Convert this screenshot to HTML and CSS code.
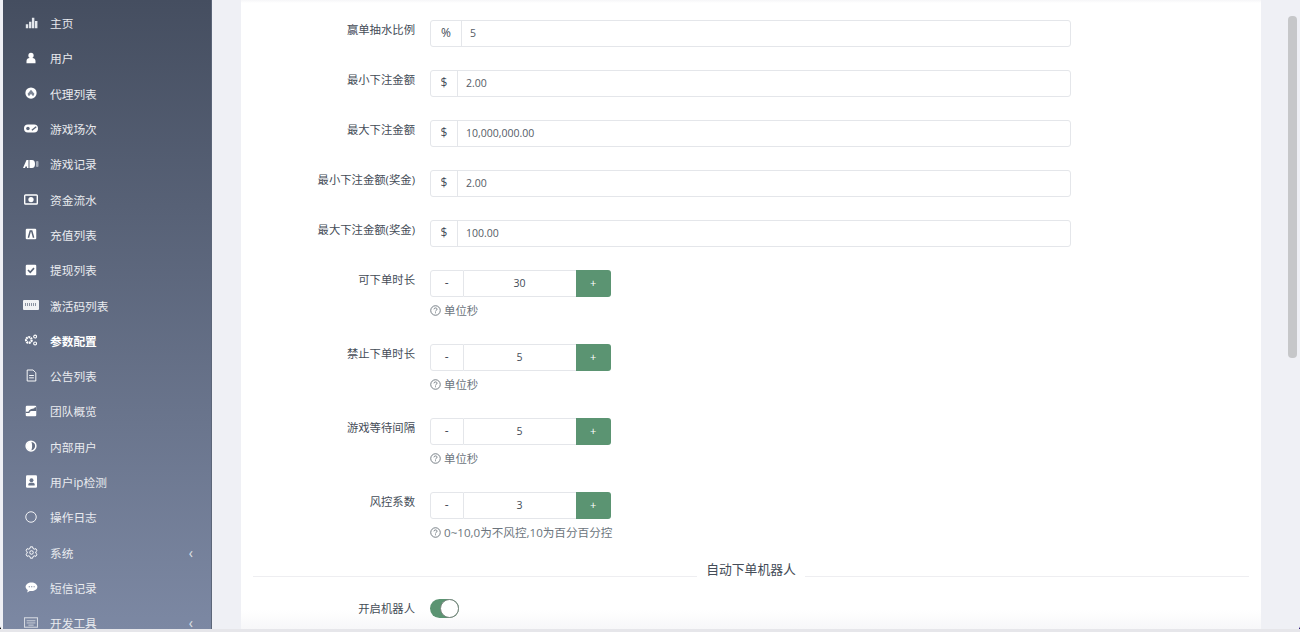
FILE: index.html
```html
<!DOCTYPE html>
<html lang="zh-CN">
<head>
<meta charset="utf-8">
<title>参数配置</title>
<link rel="stylesheet" href="styles.css">
</head>
<body>
<div class="window">
  <aside class="sidebar">
    <a class="nav-item"><span class="nav-icon"><svg viewBox="0 0 16 16" width="13" height="13"><path fill="#e4e7ec" d="M1 10h3v5H1zM5 7h2.800v8H5zM8.500 2h3v13h-3zM12.300 6h3v9h-3z"/></svg></span><span class="nav-text">主页</span></a>
    <a class="nav-item"><span class="nav-icon"><svg viewBox="0 0 16 16" width="12" height="12"><circle cx="8" cy="4.500" r="3.500" fill="#fff"/><path fill="#fff" d="M2 15v-3c0-2.500 2-4 4-4h4c2 0 4 1.500 4 4v3z"/></svg></span><span class="nav-text">用户</span></a>
    <a class="nav-item"><span class="nav-icon"><svg viewBox="0 0 16 16" width="12" height="12"><circle cx="8" cy="8" r="7.500" fill="#fff"/><path fill="#7d8696" d="M8 3.500l4.500 5.500-1 2.500H10L8 9l-2 2.500H4.500L3.500 9z"/></svg></span><span class="nav-text">代理列表</span></a>
    <a class="nav-item"><span class="nav-icon"><svg viewBox="0 0 16 10" width="14" height="9"><rect x="0" y="0.500" width="16" height="9" rx="4.500" fill="#fff"/><circle cx="4.500" cy="5" r="2" fill="#5a6477"/><path stroke="#5a6477" stroke-width="1.500" d="M9 7l5-4"/></svg></span><span class="nav-text">游戏场次</span></a>
    <a class="nav-item"><span class="nav-icon"><svg viewBox="0 0 16 8" width="16" height="8"><path fill="#fff" d="M0 8L3.500 0h2v8H4V6.500H2.500L2 8zM6.500 0H9c2 0 3 1.500 3 4s-1 4-3 4H6.500z"/><rect x="13" y="1" width="2.500" height="6" rx="1" fill="#a4abb8"/></svg></span><span class="nav-text">游戏记录</span></a>
    <a class="nav-item"><span class="nav-icon"><svg viewBox="0 0 16 12" width="14" height="11"><rect x="0.800" y="0.800" width="14.400" height="10.400" rx="1" fill="none" stroke="#fff" stroke-width="1.600"/><circle cx="8" cy="6" r="3" fill="#fff"/></svg></span><span class="nav-text">资金流水</span></a>
    <a class="nav-item"><span class="nav-icon"><svg viewBox="0 0 16 16" width="12" height="12"><rect x="1" y="1" width="14" height="14" rx="1.500" fill="#fff"/><path fill="none" stroke="#5a6477" stroke-width="2" d="M4.500 13L7 4h2l2.500 9"/></svg></span><span class="nav-text">充值列表</span></a>
    <a class="nav-item"><span class="nav-icon"><svg viewBox="0 0 16 16" width="12" height="12"><rect x="1" y="1" width="14" height="14" rx="1.500" fill="#fff"/><path fill="none" stroke="#5a6477" stroke-width="2.200" d="M4 8l3 3 5-5.500"/></svg></span><span class="nav-text">提现列表</span></a>
    <a class="nav-item"><span class="nav-icon"><svg viewBox="0 0 16 10" width="16" height="10"><rect width="16" height="10" rx="1" fill="#f1f2f5"/><path stroke="#8a92a1" stroke-width="3" stroke-dasharray="1 1" d="M2 4.500h12"/></svg></span><span class="nav-text">激活码列表</span></a>
    <a class="nav-item active"><span class="nav-icon"><svg viewBox="0 0 16 14" width="14" height="12"><circle cx="5.500" cy="7" r="3.300" fill="none" stroke="#fff" stroke-width="2.600" stroke-dasharray="2.200 0.700"/><circle cx="12.800" cy="3" r="1.700" fill="none" stroke="#fff" stroke-width="1.300"/><circle cx="12.800" cy="11" r="1.700" fill="none" stroke="#fff" stroke-width="1.300"/></svg></span><span class="nav-text">参数配置</span></a>
    <a class="nav-item"><span class="nav-icon"><svg viewBox="0 0 14 16" width="11" height="13"><path fill="none" stroke="#fff" stroke-width="1.200" d="M1.500 1h7.500l3.500 3.500V15h-11zM4 8h6M4 11h6"/></svg></span><span class="nav-text">公告列表</span></a>
    <a class="nav-item"><span class="nav-icon"><svg viewBox="0 0 16 16" width="12" height="12"><rect x="1" y="1" width="14" height="14" rx="1.500" fill="#fff"/><path fill="#5f697d" d="M15 3v5H8.500C7 8 6 9 6 10.500H1V9h3.500C6 6 8 5 10 5c2 0 3-1 3-2z"/></svg></span><span class="nav-text">团队概览</span></a>
    <a class="nav-item"><span class="nav-icon"><svg viewBox="0 0 16 16" width="12" height="12"><circle cx="8" cy="8" r="6.500" fill="#667085" stroke="#fff" stroke-width="2"/><path fill="#fff" d="M8 2a6 6 0 0 0 0 12c2-2 2-10 0-12z"/></svg></span><span class="nav-text">内部用户</span></a>
    <a class="nav-item"><span class="nav-icon"><svg viewBox="0 0 14 16" width="11" height="13"><rect width="14" height="16" rx="1.500" fill="#fff"/><circle cx="7" cy="6.500" r="2.500" fill="#69748a"/><path fill="#69748a" d="M3 13v-1.500c0-1 1-2 2-2h4c1 0 2 1 2 2V13z"/></svg></span><span class="nav-text">用户ip检测</span></a>
    <a class="nav-item"><span class="nav-icon"><svg viewBox="0 0 16 16" width="12" height="12"><circle cx="8" cy="8" r="7" fill="none" stroke="#fff" stroke-width="1.200"/></svg></span><span class="nav-text">操作日志</span></a>
    <a class="nav-item"><span class="nav-icon"><svg viewBox="0 0 16 16" width="13" height="13"><path fill="none" stroke="#fff" stroke-width="1.200" d="M6.600 1h2.800l.4 2 1.600.9 2-.6 1.400 2.400-1.500 1.400v1.800l1.500 1.400-1.400 2.400-2-.6-1.600.9-.4 2H6.600l-.4-2-1.600-.9-2 .6-1.400-2.400 1.500-1.400V7.100L1.200 5.700l1.400-2.400 2 .6 1.600-.9z"/><circle cx="8" cy="8" r="2.200" fill="none" stroke="#fff" stroke-width="1.200"/></svg></span><span class="nav-text">系统</span><span class="chev">‹</span></a>
    <a class="nav-item"><span class="nav-icon"><svg viewBox="0 0 16 14" width="13" height="11"><path fill="#fff" d="M8 0.500c4.200 0 7.500 2.500 7.500 5.500S12.200 11.500 8 11.500c-.8 0-1.500 0-2.200-.2L2.500 13.500l.8-3.300C1.500 9.200.5 7.700.5 6 .5 3 3.800.5 8 .5z"/><path stroke="#6f7a93" stroke-width="1.400" stroke-dasharray="1.400 1.700" d="M4.500 6h7.500"/></svg></span><span class="nav-text">短信记录</span></a>
    <a class="nav-item"><span class="nav-icon"><svg viewBox="0 0 16 12" width="14" height="11"><rect x="0.600" y="0.600" width="14.800" height="10.800" fill="none" stroke="#d5d9e1" stroke-width="1.200"/><path stroke="#d5d9e1" d="M3 4h10M3 6.500h10M5 9h6"/></svg></span><span class="nav-text">开发工具</span><span class="chev">‹</span></a>
  </aside>

  <main class="content">
    <form class="card">
      <div class="row">
        <label class="row-label">赢单抽水比例</label>
        <div class="row-field"><div class="input-group"><span class="addon addon-wide">%</span><span class="value">5</span></div></div>
      </div>
      <div class="row">
        <label class="row-label">最小下注金额</label>
        <div class="row-field"><div class="input-group"><span class="addon">$</span><span class="value">2.00</span></div></div>
      </div>
      <div class="row">
        <label class="row-label">最大下注金额</label>
        <div class="row-field"><div class="input-group"><span class="addon">$</span><span class="value">10,000,000.00</span></div></div>
      </div>
      <div class="row">
        <label class="row-label">最小下注金额(奖金)</label>
        <div class="row-field"><div class="input-group"><span class="addon">$</span><span class="value">2.00</span></div></div>
      </div>
      <div class="row">
        <label class="row-label">最大下注金额(奖金)</label>
        <div class="row-field"><div class="input-group"><span class="addon">$</span><span class="value">100.00</span></div></div>
      </div>
      <div class="row row-step">
        <label class="row-label">可下单时长</label>
        <div class="row-field">
          <div class="stepper"><span class="step-minus">-</span><span class="step-value">30</span><span class="step-plus">+</span></div>
          <p class="hint"><svg class="hint-icon" viewBox="0 0 12 12" width="11" height="11"><circle cx="6" cy="6" r="5.200" fill="none" stroke="#6c757d"/><path fill="none" stroke="#6c757d" d="M4.300 4.700C4.400 3.700 5.100 3.200 6 3.200c1 0 1.700.6 1.700 1.400 0 1.200-1.700 1.200-1.700 2.400M6 8v1"/></svg>单位秒</p>
        </div>
      </div>
      <div class="row row-step">
        <label class="row-label">禁止下单时长</label>
        <div class="row-field">
          <div class="stepper"><span class="step-minus">-</span><span class="step-value">5</span><span class="step-plus">+</span></div>
          <p class="hint"><svg class="hint-icon" viewBox="0 0 12 12" width="11" height="11"><circle cx="6" cy="6" r="5.200" fill="none" stroke="#6c757d"/><path fill="none" stroke="#6c757d" d="M4.300 4.700C4.400 3.700 5.100 3.200 6 3.200c1 0 1.700.6 1.700 1.400 0 1.200-1.700 1.200-1.700 2.400M6 8v1"/></svg>单位秒</p>
        </div>
      </div>
      <div class="row row-step">
        <label class="row-label">游戏等待间隔</label>
        <div class="row-field">
          <div class="stepper"><span class="step-minus">-</span><span class="step-value">5</span><span class="step-plus">+</span></div>
          <p class="hint"><svg class="hint-icon" viewBox="0 0 12 12" width="11" height="11"><circle cx="6" cy="6" r="5.200" fill="none" stroke="#6c757d"/><path fill="none" stroke="#6c757d" d="M4.300 4.700C4.400 3.700 5.100 3.200 6 3.200c1 0 1.700.6 1.700 1.400 0 1.200-1.700 1.200-1.700 2.400M6 8v1"/></svg>单位秒</p>
        </div>
      </div>
      <div class="row row-step">
        <label class="row-label">风控系数</label>
        <div class="row-field">
          <div class="stepper"><span class="step-minus">-</span><span class="step-value">3</span><span class="step-plus">+</span></div>
          <p class="hint hint-long"><svg class="hint-icon" viewBox="0 0 12 12" width="11" height="11"><circle cx="6" cy="6" r="5.200" fill="none" stroke="#6c757d"/><path fill="none" stroke="#6c757d" d="M4.300 4.700C4.400 3.700 5.100 3.200 6 3.200c1 0 1.700.6 1.700 1.400 0 1.200-1.700 1.200-1.700 2.400M6 8v1"/></svg>0~10,0为不风控,10为百分百分控</p>
        </div>
      </div>
      <div class="divider"><span class="divider-text">自动下单机器人</span></div>
      <div class="row row-toggle">
        <label class="row-label">开启机器人</label>
        <div class="row-field"><span class="switch"><span class="knob"></span></span></div>
      </div>
    </form>
  </main>

  <div class="scrollbar"><div class="scroll-thumb"></div></div>
  <span class="corner corner-left"></span>
  <span class="corner corner-right"></span>
</div>
</body>
</html>
```
FILE: styles.css
```css
* { box-sizing: border-box; }
html, body { margin: 0; padding: 0; height: 100%; overflow: hidden; background: #fff; }
body { font-family: "Open Sans", "Noto Sans CJK SC", sans-serif; }

.window {
  position: relative;
  width: 1300px; height: 632px;
  display: flex;
  background: #eff0f5;
  overflow: hidden;
  border-bottom: 3px solid #e6e6ea;
}

.sidebar {
  flex: none;
  margin-left: 3px;
  width: 209px;
  background: linear-gradient(180deg, #454e60 0%, #7c88a3 100%);
  padding-top: 5px;
  overflow: hidden;
  border-right: 1px solid #5c6679;
}
.nav-item {
  display: flex; align-items: center;
  height: 35.3px;
  color: #e9ebef;
  font-size: 11.7px;
  text-decoration: none;
  flex: none;
}
.nav-item.active { font-weight: 700; color: #fff; }
.nav-icon { width: 47px; padding-left: 9px; flex: none; display: flex; justify-content: center; align-items: center; }
.nav-text { flex: 1; }
.chev { font-size: 14px; margin-right: 18px; color: #dfe2e8; }

.content {
  flex: none; width: 1048px; margin-left: 29px;
  height: 100%;
}
.card {
  width: 1020px; height: 100%;
  background: linear-gradient(180deg, #f6f6f8 0, #fff 3px, #fff 610px, #f7f7f9 100%);
  padding: 20px 12px 0;
  color: #444c57;
  font-size: 11.4px;
}

.row { display: flex; align-items: flex-start; height: 50px; }
.row-step { height: 74px; }
.row-label { width: 162px; text-align: right; line-height: 20px; flex: none; font-size: 11.35px; }
.row-field { margin-left: 15px; width: 641px; flex: none; }

.input-group {
  display: flex; height: 27px;
  border: 1px solid #e4e6ea; border-radius: 3px;
  background: #fff;
}
.addon { width: 27px; flex: none; text-align: center; line-height: 24px; border-right: 1px solid #e4e6ea; font-size: 12px; }
.addon-wide { width: 31px; }
.value { padding-left: 8px; line-height: 24px; font-size: 10.5px; color: #555c66; }

.stepper { display: flex; width: 181px; height: 27px; }
.step-minus { width: 33.5px; border: 1px solid #e4e6ea; border-radius: 3px 0 0 3px; text-align: center; line-height: 24px; font-size: 12px; }
.step-value { flex: 1; border-top: 1px solid #e4e6ea; border-bottom: 1px solid #e4e6ea; text-align: center; line-height: 24px; font-size: 10.5px; }
.step-plus { width: 35.5px; background: #5b9472; color: #fff; border-radius: 0 3px 3px 0; text-align: center; line-height: 26px; font-size: 11px; }

.hint { margin: 6px 0 0; display: flex; align-items: center; height: 14px; font-size: 11.4px; color: #6c757d; }
.hint-long { font-size: 11.6px; }
.hint-icon { margin-right: 3px; }

.divider { height: 1px; background: #eeeef1; margin-top: 10px; position: relative; display: flex; justify-content: center; }
.divider-text { position: absolute; top: -15px; height: 18px; background: #fff; padding: 0 9px; font-size: 12.8px; line-height: 16px; color: #444c57; }

.row-toggle { margin-top: 22px; height: 30px; }
.switch { display: block; width: 29px; height: 19px; border-radius: 10px; background: #5b9472; position: relative; }
.knob { position: absolute; right: 0; top: 0; width: 19px; height: 19px; border-radius: 50%; background: #fff; border: 1px solid #78847d; }

.scrollbar { width: 10px; position: relative; margin-left: -1px; background: #eff0f5; }
.scroll-thumb { margin-top: 16px; width: 9px; height: 342px; border-radius: 4px; background: #c6c7c9; }

.corner { position: absolute; bottom: -3px; width: 6px; height: 6px; }
.corner-left { left: 0; background: radial-gradient(circle at 100% 0, transparent 5.5px, #111 6px); }
.corner-right { right: 0; background: radial-gradient(circle at 0 0, transparent 5.5px, #33207c 6px); }
```
